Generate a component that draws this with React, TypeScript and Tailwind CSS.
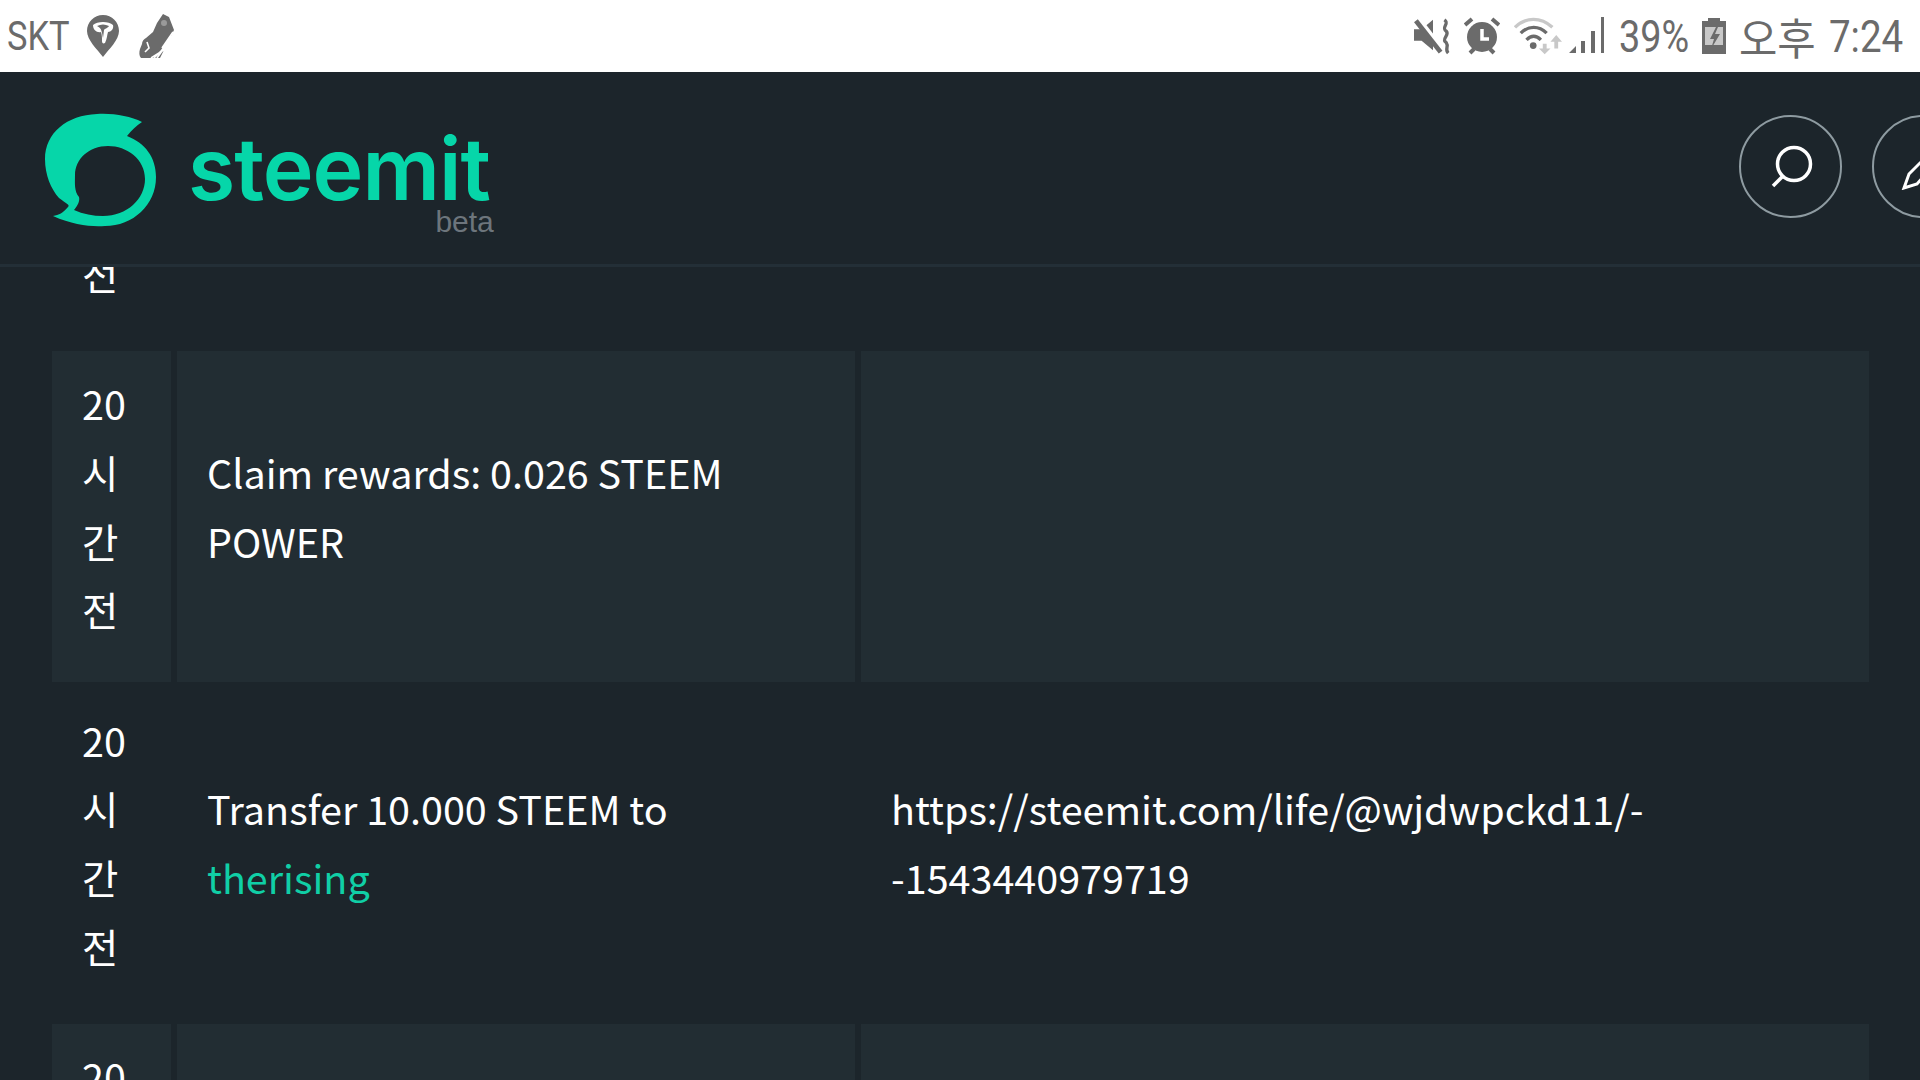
const CJK = "font-['Noto_Sans_CJK_KR','Noto_Sans',sans-serif]"

function Logo() {
  return (
    <svg width="114" height="116" viewBox="0 0 114 116" className="shrink-0">
      <path
        fill="#06d6a9"
        fillRule="evenodd"
        d="M97 9C85 3 68 0 52 1C22 2 0 20 0 46C0 62 6 76 14 85C22 91 25 92 23 94C18 100 14 102 8 103C28 112 46 114 60 113C88 113 111 92 111 64C111 44 100 30 82 23C87 17 91 13 97 9ZM63 33C82 33 100 46 100 66C100 86 82 103 58 103C48 103 38 101 29 97C33 92 35 88 34 84C29 78 30 70 30 62C30 46 44 33 63 33Z"
      />
    </svg>
  )
}

function StatusLeft() {
  return (
    <div className="flex items-center text-[#6b6b6b]">
      <span className="font-['Roboto',sans-serif] text-[41px] leading-none origin-left scale-x-[0.84] w-[77px]">SKT</span>
      <svg width="32" height="42" viewBox="0 0 32 42" className="ml-[3px]">
        <path fill="#6b6b6b" fillRule="evenodd" d="M16 0C7 0 0 7 0 16C0 25 10 34 16 42C22 34 32 25 32 16C32 7 25 0 16 0Z" />
        <path fill="#fff" d="M6 10C10 6 22 6 26 10C27 14 24 17 21 17C20 20 20 24 18 28C16 29 15 28 15 26C15 23 15 20 14 17C10 18 6 15 6 10Z" />
        <path fill="#6b6b6b" d="M10 11C14 9 18 9 22 11C20 14 18 13 17 15L16 23C15 18 15 13 10 11Z" />
      </svg>
      <svg width="36" height="44" viewBox="0 0 36 44" className="ml-[20px]">
        <path fill="#6b6b6b" d="M24 0L30 3L35 16L31 24L27 31L24 38L21 44L2 44C0 42 0 38 1 35L3 30C3 27 5 25 7 24L14 18L18 9Z" />
        <path stroke="#fff" strokeWidth="1.6" fill="none" d="M12 44L28 34M15 44L29 30M18 44L31 26M20 40L33 22M23 34L34 18M8 28L10 34L6 38" />
        <circle cx="25" cy="9" r="3" fill="#9a9a9a" />
      </svg>
    </div>
  )
}

function StatusRight() {
  return (
    <div className="flex items-center text-[#6b6b6b]">
      <svg width="38" height="38" viewBox="0 0 40 38">
        <path fill="#6b6b6b" d="M0 12H8L20 2V34L8 24H0Z" />
        <path stroke="#fff" strokeWidth="5" d="M4 0L33 37" />
        <path stroke="#6b6b6b" strokeWidth="5" d="M2 3L28 36" />
        <path stroke="#6b6b6b" strokeWidth="3.5" fill="none" d="M32 2C38 6 28 10 34 14C38 18 28 22 34 26C37 30 32 33 36 37" />
      </svg>
      <svg width="36" height="38" viewBox="0 0 36 38" className="ml-[12px]">
        <circle cx="18" cy="20" r="15" fill="#6b6b6b" />
        <path stroke="#6b6b6b" strokeWidth="4" d="M1 8L8 2M35 8L28 2M6 36L10 32M30 36L26 32" />
        <path stroke="#fff" strokeWidth="3.5" fill="none" d="M18 12V22H25" />
      </svg>
      <svg width="48" height="38" viewBox="0 0 50 38" className="ml-[14px]" fill="none">
        <path stroke="#c8c8c8" strokeWidth="3.5" d="M1 10C12 -1 28 -1 40 10" />
        <path stroke="#6b6b6b" strokeWidth="3.5" d="M7 16C15 8 26 8 34 16M13 23C18 18 23 18 28 23" />
        <circle cx="20" cy="29" r="3.5" fill="#6b6b6b" />
        <path fill="#c8c8c8" d="M30 27H34V32H38L32 38L26 32H30ZM44 18L50 25H46V32H42V25H38Z" />
      </svg>
      <svg width="35" height="38" viewBox="0 0 35 38" className="ml-[7px]">
        <path fill="#6b6b6b" d="M0 36L7 29V36ZM12 24H16V36H12ZM22 14H26V36H22ZM32 0H35V36H32Z" />
      </svg>
      <span className="font-['Roboto',sans-serif] text-[45px] leading-none ml-[15px] origin-left scale-x-[0.84] w-[70px] whitespace-nowrap">39%</span>
      <svg width="24" height="36" viewBox="0 0 24 36" className="ml-[13px]">
        <path fill="#6b6b6b" d="M6 0H18V3H24V36H0V3H6Z" />
        <path fill="#c8c8c8" d="M3 9H21V27H3Z" />
        <path fill="#6b6b6b" d="M14 9L8 21H12L9 31L18 16H13L16 9Z" />
      </svg>
      <span className={`${CJK} text-[43px] leading-none ml-[13px] origin-left scale-x-[0.97] w-[77px] whitespace-nowrap`}>오후</span>
      <span className="font-['Roboto',sans-serif] text-[45px] leading-none ml-[13px] origin-left scale-x-[0.855] w-[74px] whitespace-nowrap">7:24</span>
    </div>
  )
}

function Row({ shaded, memo, children }: { shaded?: boolean; memo?: React.ReactNode; children?: React.ReactNode }) {
  const bg = shaded ? 'bg-[#222d33]' : ''
  return (
    <tr>
      <td className={`${bg} px-[30px] pt-[18px] pb-[38px] align-middle`}>20시간 전</td>
      <td className={`${bg} px-[30px] pt-[18px] pb-[38px] align-middle`}>{children}</td>
      <td className={`${bg} px-[30px] pt-[18px] pb-[38px] align-middle`}>{memo}</td>
    </tr>
  )
}

export default function App() {
  return (
    <div className="w-[1920px] h-[1080px] overflow-hidden flex flex-col bg-[#1c252b]">
      <div className="h-[72px] shrink-0 bg-white flex items-center justify-between pl-[7px] pr-[17px]">
        <StatusLeft />
        <StatusRight />
      </div>
      <header className="h-[195px] shrink-0 border-b-[3px] border-[#232f37] flex items-center pl-[45px] overflow-hidden relative z-10 bg-[#1c252b]">
        <div className="mt-[6px]">
          <Logo />
        </div>
        <div className="relative ml-[29px] mt-[1px]">
          <span className="font-['Inter',sans-serif] font-semibold text-[86px] leading-none text-[#06d6a9] tracking-[-1px]">steemit</span>
          <span className="absolute right-[-4px] top-[81px] font-['Liberation_Sans',sans-serif] text-[30px] leading-none text-[#6d757c]">beta</span>
        </div>
        <div className="ml-auto mr-[-55px] flex gap-[30px] -mt-[3px]">
          <div className="w-[103px] h-[103px] rounded-full border-2 border-[#8e9ba1] flex items-center justify-center">
            <svg width="46" height="46" viewBox="0 0 46 46" fill="none" stroke="#fff" strokeWidth="3.5">
              <circle cx="26" cy="20" r="16.5" />
              <path d="M15 32L5 42" />
            </svg>
          </div>
          <div className="w-[103px] h-[103px] rounded-full border-2 border-[#8e9ba1] flex items-center justify-center">
            <svg width="46" height="46" viewBox="0 0 46 46" fill="none" stroke="#fff" strokeWidth="3">
              <path d="M3 44L8 30L34 4C38 1 44 6 42 10L16 40Z" />
            </svg>
          </div>
        </div>
      </header>
      <main className="flex-1 overflow-hidden">
        <table className={`${CJK} -mt-[258px] ml-[46px] w-[1829px] table-fixed border-separate border-spacing-[6px] text-[39.5px] leading-[68.6px] text-white`}>
          <colgroup>
            <col className="w-[119px]" />
            <col className="w-[678px]" />
            <col />
          </colgroup>
          <tbody>
            <Row />
            <Row shaded>Claim rewards: 0.026 STEEM POWER</Row>
            <Row
              memo={
                <>
                  https://steemit.com/life/@wjdwpckd11/-
                  <br />
                  -1543440979719
                </>
              }
            >
              Transfer 10.000 STEEM to <span className="text-[#10cfa6]">therising</span>
            </Row>
            <Row shaded />
          </tbody>
        </table>
      </main>
    </div>
  )
}
